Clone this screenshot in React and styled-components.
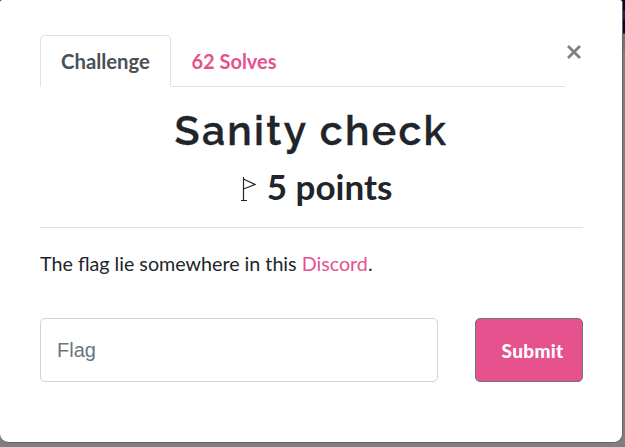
import React from "react";
import styled, { createGlobalStyle } from "styled-components";

const Global = createGlobalStyle`
  * { box-sizing: border-box; }
  body { margin: 0; background: #7f7f7f; overflow: hidden; font-family: Lato, "Liberation Sans", sans-serif; color: #212529; }
`;
const Page = styled.div`height: 447px; display: flex; background: linear-gradient(#05051f 0 10px, #22223a 11px 19px, #05051f 20px 33px, #737373 34px 50px, #7f7f7f 52px);`;
const Modal = styled.main`
  width: 623px; height: 443px; background: #fff; padding: 35px 39px 0 40px;
  border: solid #666; border-width: 0 1px 1px 0; border-radius: 2px 3px 9px 9px;
`;
const Header = styled.header`display: flex; justify-content: space-between; height: 52px; margin-bottom: 19px;`;
const Tabs = styled.nav`display: flex; width: 525px; border-bottom: 1px solid #dee2e6;`;
const Tab = styled.button`
  height: 52px; width: ${p => p.$width}; padding: 0; background: ${p => p.$active ? "#fff" : "transparent"};
  border: 1px solid ${p => p.$active ? "#dee2e6" : "transparent"}; border-bottom-color: ${p => p.$active ? "#fff" : "transparent"};
  border-radius: 5px 5px 0 0; color: ${p => p.$active ? "#495057" : "#e5528e"}; font: 700 ${p => p.$active ? "20.3px" : "20px"} Lato, sans-serif;
`;
const Close = styled.button`border: 0; padding: 8px 0 0; background: none; height: 26px; color: #7f7f7f; svg { display: block; }`;
const Title = styled.h1`font: 600 41px/50px Raleway, "Open Sans", sans-serif; letter-spacing: 2.3px; text-align: center; margin: 0; -webkit-text-stroke: .35px #212529;`;
const Points = styled.h2`font: 700 35px/42px Lato, sans-serif; display: flex; justify-content: center; gap: 11px; margin: 9px 0 20px 9px; height: 42px;`;
const Flag = styled.svg`width: 16px; height: 28px; margin-top: 12px;`;
const Description = styled.p`border-top: 1px solid #dee2e6; padding-top: 21px; margin: 0; font-size: 19.7px; line-height: 30px;`;
const Link = styled.a`color: #e5528e;`;
const Form = styled.form`display: flex; justify-content: space-between; margin-top: 39px;`;
const Input = styled.input`
  width: 398px; height: 64px; padding: 0 16px; border: 1px solid #ced4da; border-radius: 5px; font: 20px "Liberation Sans", sans-serif;
  &::placeholder { color: #6c757d; opacity: 1; }
`;
const Submit = styled.button`width: 108px; height: 64px; padding: 1px 0 0 7px; border: 1px solid #6c757d; border-radius: 5px; color: #fff; background: #e5528e; font: 900 19px Lato, sans-serif; letter-spacing: .3px;`;

export default function App() {
  return <><Global /><Page><Modal>
    <Header>
      <Tabs><Tab type="button" $active $width="131px">Challenge</Tab><Tab type="button" $width="126px">62 Solves</Tab></Tabs>
      <Close aria-label="Close"><svg width="17" height="16" viewBox="0 0 17 16"><path d="M2 2L14 14M14 2L2 14" stroke="currentColor" strokeWidth="2.8" /></svg></Close>
    </Header>
    <Title>Sanity check</Title>
    <Points><Flag viewBox="0 0 16 28"><path d="M3.5 0V24M1 23.5H7M3.5 2L15 7.5L3.5 12" fill="none" stroke="#212529" strokeWidth="1.2" /></Flag>5 points</Points>
    <Description>The flag lie somewhere in this <Link>Discord</Link>.</Description>
    <Form><Input placeholder="Flag" /><Submit type="button">Submit</Submit></Form>
  </Modal></Page></>;
}
